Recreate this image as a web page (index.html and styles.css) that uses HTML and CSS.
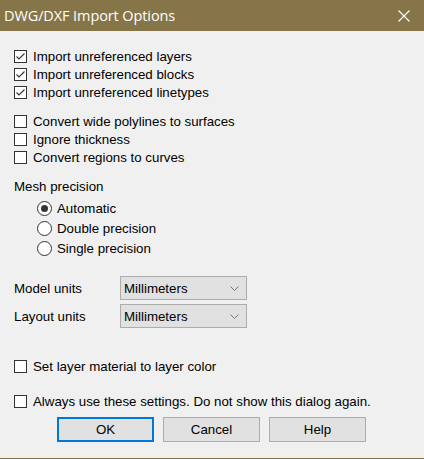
FILE: index.html
```html
<!DOCTYPE html>
<html>
<head>
<meta charset="utf-8">
<link rel="stylesheet" href="styles.css">
</head>
<body>
<div class="dialog">
  <div class="titlebar">
    <span class="title">DWG/DXF Import Options</span>
    <svg class="close" width="12" height="12" viewBox="0 0 12 12"><path d="M0.5 0.5L11.5 11.5M11.5 0.5L0.5 11.5" stroke="#fff" stroke-width="1.1" fill="none"/></svg>
  </div>
  <div class="content">
    <div class="group g1">
      <label class="row"><span class="cb checked"><svg width="11" height="11" viewBox="0 0 11 11"><path d="M1.5 5.5L4 8L9.5 2.5" stroke="#333" stroke-width="1.1" fill="none"/></svg></span>Import unreferenced layers</label>
      <label class="row"><span class="cb checked"><svg width="11" height="11" viewBox="0 0 11 11"><path d="M1.5 5.5L4 8L9.5 2.5" stroke="#333" stroke-width="1.1" fill="none"/></svg></span>Import unreferenced blocks</label>
      <label class="row"><span class="cb checked"><svg width="11" height="11" viewBox="0 0 11 11"><path d="M1.5 5.5L4 8L9.5 2.5" stroke="#333" stroke-width="1.1" fill="none"/></svg></span>Import unreferenced linetypes</label>
    </div>
    <div class="group g2">
      <label class="row"><span class="cb"></span>Convert wide polylines to surfaces</label>
      <label class="row"><span class="cb"></span>Ignore thickness</label>
      <label class="row"><span class="cb"></span>Convert regions to curves</label>
    </div>
    <div class="mesh-label">Mesh precision</div>
    <div class="radios">
      <label class="rrow"><span class="rb on"></span>Automatic</label>
      <label class="rrow"><span class="rb"></span>Double precision</label>
      <label class="rrow"><span class="rb"></span>Single precision</label>
    </div>
    <div class="units">
      <div class="urow"><span class="ulabel">Model units</span><div class="select"><span>Millimeters</span><svg width="9" height="5" viewBox="0 0 9 5"><path d="M0.5 0.5L4.5 4.5L8.5 0.5" stroke="#777" stroke-width="1" fill="none"/></svg></div></div>
      <div class="urow"><span class="ulabel">Layout units</span><div class="select"><span>Millimeters</span><svg width="9" height="5" viewBox="0 0 9 5"><path d="M0.5 0.5L4.5 4.5L8.5 0.5" stroke="#777" stroke-width="1" fill="none"/></svg></div></div>
    </div>
    <label class="row single s1"><span class="cb"></span>Set layer material to layer color</label>
    <label class="row single s2"><span class="cb"></span>Always use these settings. Do not show this dialog again.</label>
    <div class="buttons">
      <button class="btn default">OK</button>
      <button class="btn">Cancel</button>
      <button class="btn">Help</button>
    </div>
  </div>
</div>
</body>
</html>
```
FILE: styles.css
```css
html, body {
  margin: 0;
  padding: 0;
  background: #f0f0f0;
}
.dialog {
  width: 424px;
  height: 459px;
  box-sizing: border-box;
  border-bottom: 1px solid #857548;
  background: #f0f0f0;
  font-family: "Liberation Sans", Arial, sans-serif;
  font-size: 13.3px;
  color: #000;
}
.titlebar {
  height: 31px;
  background: #857548;
  display: flex;
  align-items: center;
  justify-content: space-between;
  padding: 0 14px 0 4px;
}
.title {
  font-family: "Open Sans", "Noto Sans", sans-serif;
  font-size: 14.5px;
  color: #fff;
  letter-spacing: -0.1px;
}
.close { display: block; }
.content {
  padding: 0 14px;
}
.group { display: flex; flex-direction: column; }
.g1 { margin-top: 16px; }
.g2 { margin-top: 11px; }
.row {
  height: 18px;
  display: flex;
  align-items: center;
  gap: 6px;
  white-space: nowrap;
}
.cb {
  width: 11px;
  height: 11px;
  border: 1px solid #333;
  background: #fff;
  display: flex;
  align-items: center;
  justify-content: center;
  flex: none;
}
.cb svg { display: block; }
.mesh-label {
  margin-top: 12px;
  height: 18px;
  line-height: 18px;
}
.radios {
  margin-top: 2px;
  padding-left: 23px;
  display: flex;
  flex-direction: column;
}
.rrow {
  height: 20px;
  display: flex;
  align-items: center;
  gap: 5px;
}
.rb {
  width: 13px;
  height: 13px;
  border: 1px solid #333;
  border-radius: 50%;
  background: #fff;
  position: relative;
  flex: none;
}
.rb.on::after {
  content: "";
  position: absolute;
  left: 3px;
  top: 3px;
  width: 7px;
  height: 7px;
  border-radius: 50%;
  background: #333;
}
.units {
  margin-top: 18px;
  display: flex;
  flex-direction: column;
  gap: 4px;
}
.urow {
  display: flex;
  align-items: center;
  height: 24px;
}
.ulabel { width: 106px; }
.select {
  width: 115px;
  height: 22px;
  border: 1px solid #adadad;
  background: #e1e1e1;
  display: flex;
  align-items: center;
  justify-content: space-between;
  padding: 0 7px 0 3px;
  box-sizing: content-box;
}
.select svg { display: block; }
.s1 { margin-top: 29px; }
.s2 { margin-top: 17px; }
.buttons {
  margin-top: 7px;
  padding-left: 43px;
  display: flex;
  gap: 9px;
}
.btn {
  width: 97px;
  height: 25px;
  box-sizing: border-box;
  border: 1px solid #adadad;
  background: #e1e1e1;
  font-family: "Liberation Sans", Arial, sans-serif;
  font-size: 13.3px;
  color: #000;
  padding: 0;
}
.btn.default {
  border: 2px solid #0078d7;
}
```
